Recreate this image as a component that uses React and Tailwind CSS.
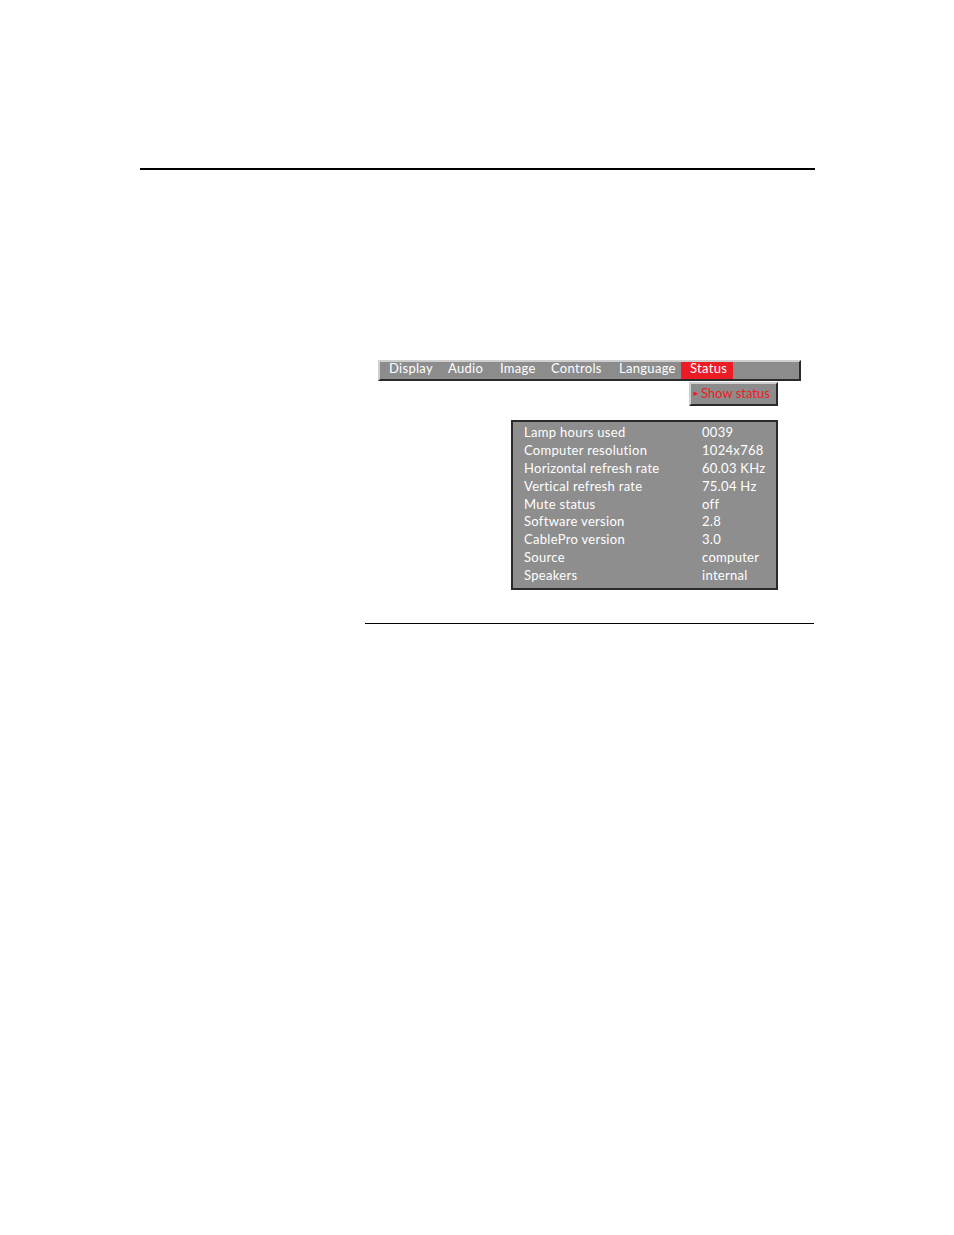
import React from 'react';

const menuItems = [
  { label: 'Display', cls: 'w-[60px] pl-[9px]' },
  { label: 'Audio', cls: 'w-[52px] pl-[8px]' },
  { label: 'Image', cls: 'w-[51px] pl-[8px]' },
  { label: 'Controls', cls: 'w-[68px] pl-[8px]' },
  { label: 'Language', cls: 'w-[70px] pl-[8px]' },
];

const rows = [
  ['Lamp hours used', '0039'],
  ['Computer resolution', '1024x768'],
  ['Horizontal refresh rate', '60.03 KHz'],
  ['Vertical refresh rate', '75.04 Hz'],
  ['Mute status', 'off'],
  ['Software version', '2.8'],
  ['CablePro version', '3.0'],
  ['Source', 'computer'],
  ['Speakers', 'internal'],
];

const App = () => {
  return (
    <div className="w-[954px] h-[1235px] bg-white relative" style={{ fontFamily: 'Lato, "Open Sans", sans-serif' }}>
      <div className="pt-[168px]">
        <div className="ml-[140px] w-[675px] h-[1.5px] bg-black" />
      </div>

      {/* menu bar */}
      <div className="ml-[378px] mt-[190px] w-[423px]">
        <div className="h-[21px] bg-[#8c8c8c] border-t-2 border-l-2 border-[#cfcfcf] border-b-2 border-r-2 border-b-[#2a2a2a] border-r-[#2a2a2a] flex items-stretch text-white text-[13px] tracking-[0.3px] leading-none">
          {menuItems.map(m => (
            <div key={m.label} className={`flex items-center pb-[3px] ${m.cls}`}>{m.label}</div>
          ))}
          <div className="flex items-center pb-[3px] bg-[#ed1c24] w-[52px] pl-[9px]">Status</div>
        </div>
        <div className="ml-[311px] mt-[1px] w-[89px] h-[24px] bg-[#8c8c8c] border-t-2 border-l-2 border-[#cfcfcf] border-b-2 border-r-2 border-b-[#2a2a2a] border-r-[#2a2a2a] flex items-center text-[#ed1c24] text-[13px] leading-none pb-[1px]">
          <span className="text-[8px] ml-[1px] mr-[1px]">&#9658;</span>
          <span>Show status</span>
        </div>
      </div>

      {/* status panel */}
      <div className="ml-[511px] mt-[14px] w-[267px] h-[170px] bg-[#8e8e8e] border-2 border-[#2a2a2a] pt-[2px] pl-[11px] text-white text-[13px] tracking-[0.3px]">
        {rows.map(([k, v]) => (
          <div key={k} className="flex h-[17.9px] items-center leading-none">
            <div className="w-[178px]">{k}</div>
            <div>{v}</div>
          </div>
        ))}
      </div>

      <div className="ml-[365px] mt-[33px] w-[449px] h-[1.5px] bg-black" />
    </div>
  );
};

export default App;
